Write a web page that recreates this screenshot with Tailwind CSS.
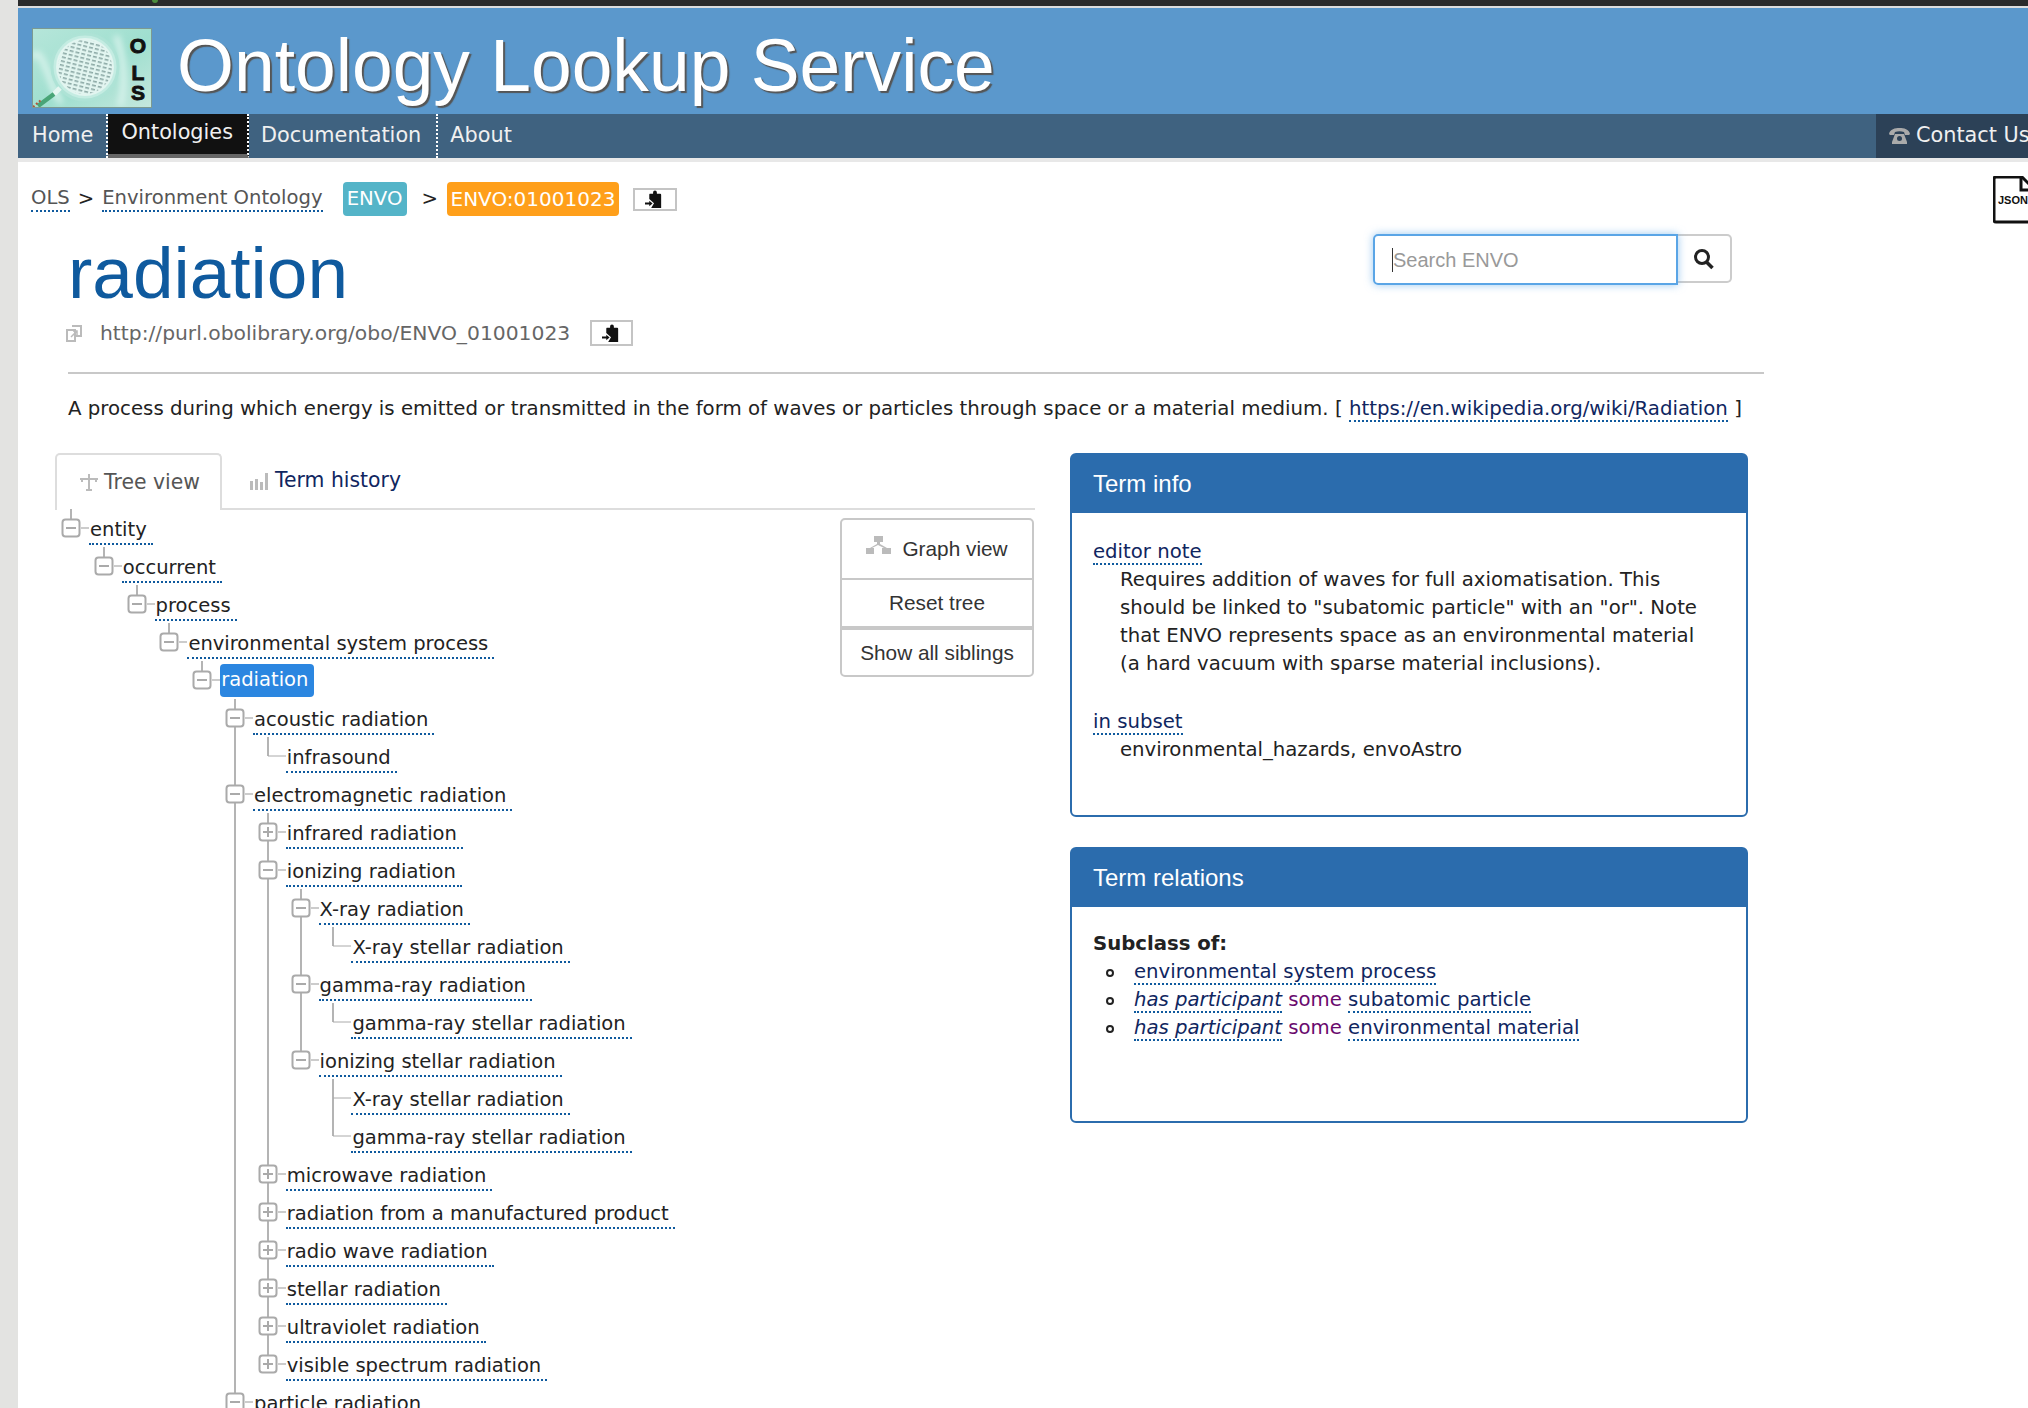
<!DOCTYPE html>
<html lang="en">
<head>
    <meta charset="UTF-8">
    <title>radiation - OLS</title>
    <script src="https://cdn.jsdelivr.net/npm/@tailwindcss/browser@4"></script>
</head>
<body class="w-[2028px] h-[1408px] overflow-hidden bg-[#e3e3e1] font-['DejaVu_Sans',sans-serif] text-[19.7px] text-[#222]">
    <!-- shared icons -->
    <svg class="hidden">
        <symbol id="minus" viewBox="0 0 28 20"><path d="M20 10h8" stroke="#999" fill="none"/><rect x="1.5" y="1.5" width="17" height="17" rx="3" fill="#fff" stroke="#aaa" stroke-width="2"/><path d="M5 10h10" stroke="#aaa" stroke-width="2"/></symbol>
        <symbol id="plus" viewBox="0 0 28 20"><path d="M20 10h8" stroke="#999" fill="none"/><rect x="1.5" y="1.5" width="17" height="17" rx="3" fill="#fff" stroke="#aaa" stroke-width="2"/><path d="M5 10h10M10 5v10" stroke="#aaa" stroke-width="2"/></symbol>
        <symbol id="leaf" viewBox="0 0 28 20"><path d="M10 10h18" stroke="#aaa" fill="none"/></symbol>
        <symbol id="clip" viewBox="0 0 20 20"><path d="M5 4h3.500V2.500a2 2 0 0 1 4 0V4H16a1 1 0 0 1 1 1v14H6.500l3-5-5-4.500V5a1 1 0 0 1 .500-1z" fill="#111"/><path d="M0 13.200h4.500v-2l3.500 3-3.500 3v-2H0z" fill="#111"/></symbol>
    </svg>

    <div class="ml-[18px] w-[2040px]">
        <div class="relative h-[6px] bg-[#2b2b2b]"><span class="absolute left-[134px] top-0 h-[3px] w-[6px] rounded-b-full bg-[#4c8c3c]"></span></div>
        <div class="h-[2px] bg-[#dedede]"></div>

        <!-- header -->
        <header class="flex h-[106px] items-start bg-[#5b98cc] pl-[14px] pt-[20px]">
            <svg class="h-[80px] w-[120px] shrink-0" viewBox="0 0 120 80">
                <defs>
                    <linearGradient id="lg" x1="0" y1="0" x2="1" y2="1"><stop offset="0" stop-color="#b6e6da"/><stop offset="0.55" stop-color="#9fdfcf"/><stop offset="1" stop-color="#c6e8de"/></linearGradient>
                    <pattern id="lines" width="6" height="4" patternUnits="userSpaceOnUse" patternTransform="rotate(14)"><rect width="4" height="1.6" fill="#6f8f8c"/></pattern>
                    <filter id="soft"><feGaussianBlur stdDeviation="0.7"/></filter>
                    <filter id="softer"><feGaussianBlur stdDeviation="3"/></filter>
                </defs>
                <rect width="120" height="80" fill="url(#lg)"/>
                <path d="M0 30C10 10 20 70 30 74M84 8c8 20 10 50 4 70" stroke="#d8f3ec" stroke-width="6" fill="none" filter="url(#softer)"/>
                <circle cx="53" cy="39" r="33" fill="#c4ece2" stroke="#aee3d6" stroke-width="3" filter="url(#soft)"/>
                <circle cx="53" cy="39" r="29" fill="#e2f5f0" filter="url(#soft)"/>
                <circle cx="53" cy="39" r="27" fill="url(#lines)" opacity=".75" filter="url(#soft)"/>
                <path d="M28 60L22 66" stroke="#e6f6f1" stroke-width="5"/>
                <path d="M22 66L6 78" stroke="#4aa577" stroke-width="4.500" filter="url(#soft)"/>
                <path d="M1 79l8-7" stroke="#b5533a" stroke-width="2" stroke-dasharray="2 2"/>
                <g font-family="Liberation Sans" font-weight="700" font-size="21" fill="#111" stroke="#111" stroke-width=".9" text-anchor="middle">
                    <text x="106" y="25">O</text>
                    <text x="106" y="52">L</text>
                    <text x="106" y="72">S</text>
                </g>
                <rect x=".5" y=".5" width="119" height="79" fill="none" stroke="#7c9a92"/>
            </svg>
            <div class="ml-[25px] -mt-[7px] font-['Liberation_Sans',sans-serif] text-[73.2px] leading-[90px] text-white [text-shadow:2px_2px_1px_#555] whitespace-nowrap">Ontology Lookup Service</div>
        </header>

        <!-- nav -->
        <nav class="flex h-[44px] justify-between bg-[#3f6280] text-[20.8px] text-[#f0f0f0]">
            <div class="flex">
                <a class="flex items-center border-r-2 border-dotted border-white pl-[14px] pr-[13px]">Home</a>
                <a class="flex items-center border-r-2 border-dotted border-r-white border-b-4 [border-bottom-style:solid] border-b-[#666] bg-[#111] pl-[13px] pr-[14px] pb-[2px]">Ontologies</a>
                <a class="flex items-center border-r-2 border-dotted border-white pl-[12px] pr-[15px]">Documentation</a>
                <a class="flex items-center pl-[12px]">About</a>
            </div>
            <a class="flex w-[182px] shrink-0 items-center gap-[6px] bg-[#2c4157] pl-[13px] whitespace-nowrap">
                <svg class="h-[16px] w-[21px]" viewBox="0 0 21 16"><path d="M0 6C1 1 6 0 10.500 0S20 1 21 6l-1 1h-4l-1-3c-3-1-6-1-9 0L5 7H1z M6 6h9l3 8v2H3v-2z" fill="#aaa"/><circle cx="10.500" cy="10.500" r="2.500" fill="#2c4157"/></svg>
                Contact Us
            </a>
        </nav>
        <div class="h-[4px] bg-[#e8e8e8]"></div>

        <!-- page body -->
        <main class="relative h-[1246px] bg-white pt-[20px]">
            <!-- json download icon -->
            <svg class="absolute left-[1975px] top-[14px] h-[48px] w-[44px]" viewBox="0 0 44 48">
                <path d="M3 1h26l12 12v33H3a2 2 0 0 1-2-2V3a2 2 0 0 1 2-2z" fill="#fff" stroke="#111" stroke-width="3"/>
                <path d="M28 1v13h13" fill="none" stroke="#111" stroke-width="3"/>
                <text x="5" y="28" font-family="Liberation Sans" font-weight="700" font-size="11" fill="#111">JSON</text>
            </svg>

            <!-- breadcrumb -->
            <div class="flex h-[34px] items-center pl-[13px] text-[19.6px] text-[#555]">
                <a class="border-b-2 border-dotted border-[#0f5a9e] leading-[24px]">OLS</a>
                <span class="ml-[8px] text-[#222]">&gt;</span>
                <a class="ml-[8px] border-b-2 border-dotted border-[#0f5a9e] leading-[24px]">Environment Ontology</a>
                <span class="ml-[20px] flex h-[34px] w-[64px] items-center justify-center rounded-[4px] bg-[#54b4c8] text-[19.7px] text-white">ENVO</span>
                <span class="ml-[15px] text-[#222]">&gt;</span>
                <span class="ml-[9px] flex h-[34px] w-[172px] items-center justify-center rounded-[4px] bg-[#ff9f1a] text-[20px] text-white">ENVO:01001023</span>
                <button class="ml-[14px] flex h-[23px] w-[44px] items-center justify-center border-2 border-[#c4c4c4]"><svg class="h-[19px] w-[19px]"><use href="#clip"/></svg></button>
            </div>

            <!-- title and search -->
            <div class="mt-[18px] flex pl-[50px]">
                <div class="w-[1305px] shrink-0">
                    <h1 class="mt-[3px] font-['Liberation_Sans',sans-serif] text-[73px] leading-[72px] text-[#0f5a9e]">radiation</h1>
                    <div class="mt-[11px] flex h-[26px] items-center text-[20.3px] text-[#666]">
                        <svg class="-ml-[2px] h-[17px] w-[16px]" viewBox="0 0 16 17"><path d="M1 5h8v11H1zM6 1h9v10H9" fill="none" stroke="#bbb" stroke-width="2"/><path d="M5 12l6-6M7 6h4v4" fill="none" stroke="#bbb" stroke-width="1.500"/></svg>
                        <span class="ml-[18px]">http://purl.obolibrary.org/obo/ENVO_01001023</span>
                        <button class="ml-[20px] flex h-[26px] w-[43px] items-center justify-center border-2 border-[#c4c4c4]"><svg class="h-[19px] w-[19px]"><use href="#clip"/></svg></button>
                    </div>
                </div>
                <div class="flex h-[51px] items-start">
                    <div class="z-10 flex h-[51px] w-[305px] items-center rounded-l-[5px] border-2 border-[#5aa5e6] pl-[17px] font-['Liberation_Sans',sans-serif] text-[20px] text-[#999] shadow-[0_0_8px_rgba(90,165,230,0.6)]"><span class="h-[24px] w-px bg-[#333]"></span>Search ENVO</div>
                    <button class="flex h-[49px] w-[54px] items-center justify-center rounded-r-[5px] border-2 border-l-0 border-[#ccc]">
                        <svg class="h-[22px] w-[22px]" viewBox="0 0 22 22"><circle cx="9" cy="9" r="6.500" fill="none" stroke="#222" stroke-width="3"/><path d="M13.500 14l6 6" stroke="#222" stroke-width="3.500"/></svg>
                    </button>
                </div>
            </div>

            <div class="mt-[26px] ml-[50px] h-[2px] w-[1696px] bg-[#c8c8c8]"></div>
            <p class="mt-[21px] ml-[50px] text-[19.75px] leading-[28px] whitespace-nowrap">A process during which energy is emitted or transmitted in the form of waves or particles through space or a material medium. [ <a class="border-b-2 border-dotted border-[#0f5a9e] text-[#10265f]">https://en.wikipedia.org/wiki/Radiation</a> ]</p>

            <div class="mt-[30px] ml-[37px] flex items-start gap-[35px]">
                <!-- left column: tabs and tree -->
                <section class="w-[980px] shrink-0">
                    <div class="flex h-[57px] border-b-2 border-[#ddd] text-[20.4px]">
                        <div class="-mb-[2px] flex h-[57px] w-[167px] items-center rounded-t-[5px] border-2 border-b-0 border-[#ddd] bg-white pl-[22px] text-[#555]">
                            <svg class="h-[20px] w-[20px]" viewBox="0 0 20 20"><path d="M10 1v15M7 17h6M1 6h18M3 6v3M17 6v3" fill="none" stroke="#bbb" stroke-width="2"/></svg>
                            <span class="ml-[5px]">Tree view</span>
                        </div>
                        <div class="flex items-center pl-[28px] text-[#10265f]">
                            <svg class="h-[18px] w-[19px]" viewBox="0 0 19 18"><path d="M0 9h3v9H0zM5 7h3v11H5zM10 10h3v8h-3zM15 1h3v17h-3z" fill="#bbb"/></svg>
                            <span class="ml-[6px]">Term history</span>
                        </div>
                    </div>

                    <div class="flex justify-between">
                        <!-- tree -->
                        <ul class="-mt-[1px] ml-[6px] text-[19.55px]">
                            <li class="relative"><span class="absolute left-[9px] top-0 h-[19px] w-[2px] bg-[#b4b4b4]"></span>
                                <div class="relative flex h-[38px] items-center"><svg class="h-[20px] w-[28px] shrink-0"><use href="#minus"/></svg><a class="-mb-[4px] border-b-2 border-dotted border-[#0f5a9e] pl-px pr-[6px] leading-[27px]">entity</a></div>
                                <ul class="pl-[32.8px]">
                                    <li class="relative"><span class="absolute left-[9px] top-0 h-[19px] w-[2px] bg-[#b4b4b4]"></span>
                                        <div class="relative flex h-[38px] items-center"><svg class="h-[20px] w-[28px] shrink-0"><use href="#minus"/></svg><a class="-mb-[4px] border-b-2 border-dotted border-[#0f5a9e] pl-px pr-[6px] leading-[27px]">occurrent</a></div>
                                        <ul class="pl-[32.8px]">
                                            <li class="relative"><span class="absolute left-[9px] top-0 h-[19px] w-[2px] bg-[#b4b4b4]"></span>
                                                <div class="relative flex h-[38px] items-center"><svg class="h-[20px] w-[28px] shrink-0"><use href="#minus"/></svg><a class="-mb-[4px] border-b-2 border-dotted border-[#0f5a9e] pl-px pr-[6px] leading-[27px]">process</a></div>
                                                <ul class="pl-[32.8px]">
                                                    <li class="relative"><span class="absolute left-[9px] top-0 h-[19px] w-[2px] bg-[#b4b4b4]"></span>
                                                        <div class="relative flex h-[38px] items-center"><svg class="h-[20px] w-[28px] shrink-0"><use href="#minus"/></svg><a class="-mb-[4px] border-b-2 border-dotted border-[#0f5a9e] pl-px pr-[6px] leading-[27px]">environmental system process</a></div>
                                                        <ul class="pl-[32.8px]">
                                                            <li class="relative"><span class="absolute left-[9px] top-0 h-[19px] w-[2px] bg-[#b4b4b4]"></span>
                                                                <div class="relative flex h-[38px] items-center"><svg class="h-[20px] w-[28px] shrink-0"><use href="#minus"/></svg><a class="flex h-[33px] items-center rounded-[4px] bg-[#2b86e0] pl-px pr-[6px] text-white">radiation</a></div>
                                                                <ul class="pl-[32.8px]">
                                                                    <li class="relative"><span class="absolute left-[9px] top-0 bottom-0 w-[2px] bg-[#b4b4b4]"></span>
                                                                        <div class="relative flex h-[38px] items-center"><svg class="h-[20px] w-[28px] shrink-0"><use href="#minus"/></svg><a class="-mb-[4px] border-b-2 border-dotted border-[#0f5a9e] pl-px pr-[6px] leading-[27px]">acoustic radiation</a></div>
                                                                        <ul class="pl-[32.8px]">
                                                                            <li class="relative"><span class="absolute left-[9px] top-0 h-[19px] w-[2px] bg-[#b4b4b4]"></span>
                                                                                <div class="relative flex h-[38px] items-center"><svg class="h-[20px] w-[28px] shrink-0"><use href="#leaf"/></svg><a class="-mb-[4px] border-b-2 border-dotted border-[#0f5a9e] pl-px pr-[6px] leading-[27px]">infrasound</a></div>
                                                                            </li>
                                                                        </ul>
                                                                    </li>
                                                                    <li class="relative"><span class="absolute left-[9px] top-0 bottom-0 w-[2px] bg-[#b4b4b4]"></span>
                                                                        <div class="relative flex h-[38px] items-center"><svg class="h-[20px] w-[28px] shrink-0"><use href="#minus"/></svg><a class="-mb-[4px] border-b-2 border-dotted border-[#0f5a9e] pl-px pr-[6px] leading-[27px]">electromagnetic radiation</a></div>
                                                                        <ul class="pl-[32.8px]">
                                                                            <li class="relative"><span class="absolute left-[9px] top-0 bottom-0 w-[2px] bg-[#b4b4b4]"></span>
                                                                                <div class="relative flex h-[38px] items-center"><svg class="h-[20px] w-[28px] shrink-0"><use href="#plus"/></svg><a class="-mb-[4px] border-b-2 border-dotted border-[#0f5a9e] pl-px pr-[6px] leading-[27px]">infrared radiation</a></div>
                                                                            </li>
                                                                            <li class="relative"><span class="absolute left-[9px] top-0 bottom-0 w-[2px] bg-[#b4b4b4]"></span>
                                                                                <div class="relative flex h-[38px] items-center"><svg class="h-[20px] w-[28px] shrink-0"><use href="#minus"/></svg><a class="-mb-[4px] border-b-2 border-dotted border-[#0f5a9e] pl-px pr-[6px] leading-[27px]">ionizing radiation</a></div>
                                                                                <ul class="pl-[32.8px]">
                                                                                    <li class="relative"><span class="absolute left-[9px] top-0 bottom-0 w-[2px] bg-[#b4b4b4]"></span>
                                                                                        <div class="relative flex h-[38px] items-center"><svg class="h-[20px] w-[28px] shrink-0"><use href="#minus"/></svg><a class="-mb-[4px] border-b-2 border-dotted border-[#0f5a9e] pl-px pr-[6px] leading-[27px]">X-ray radiation</a></div>
                                                                                        <ul class="pl-[32.8px]">
                                                                                            <li class="relative"><span class="absolute left-[9px] top-0 h-[19px] w-[2px] bg-[#b4b4b4]"></span>
                                                                                                <div class="relative flex h-[38px] items-center"><svg class="h-[20px] w-[28px] shrink-0"><use href="#leaf"/></svg><a class="-mb-[4px] border-b-2 border-dotted border-[#0f5a9e] pl-px pr-[6px] leading-[27px]">X-ray stellar radiation</a></div>
                                                                                            </li>
                                                                                        </ul>
                                                                                    </li>
                                                                                    <li class="relative"><span class="absolute left-[9px] top-0 bottom-0 w-[2px] bg-[#b4b4b4]"></span>
                                                                                        <div class="relative flex h-[38px] items-center"><svg class="h-[20px] w-[28px] shrink-0"><use href="#minus"/></svg><a class="-mb-[4px] border-b-2 border-dotted border-[#0f5a9e] pl-px pr-[6px] leading-[27px]">gamma-ray radiation</a></div>
                                                                                        <ul class="pl-[32.8px]">
                                                                                            <li class="relative"><span class="absolute left-[9px] top-0 h-[19px] w-[2px] bg-[#b4b4b4]"></span>
                                                                                                <div class="relative flex h-[38px] items-center"><svg class="h-[20px] w-[28px] shrink-0"><use href="#leaf"/></svg><a class="-mb-[4px] border-b-2 border-dotted border-[#0f5a9e] pl-px pr-[6px] leading-[27px]">gamma-ray stellar radiation</a></div>
                                                                                            </li>
                                                                                        </ul>
                                                                                    </li>
                                                                                    <li class="relative"><span class="absolute left-[9px] top-0 h-[19px] w-[2px] bg-[#b4b4b4]"></span>
                                                                                        <div class="relative flex h-[38px] items-center"><svg class="h-[20px] w-[28px] shrink-0"><use href="#minus"/></svg><a class="-mb-[4px] border-b-2 border-dotted border-[#0f5a9e] pl-px pr-[6px] leading-[27px]">ionizing stellar radiation</a></div>
                                                                                        <ul class="pl-[32.8px]">
                                                                                            <li class="relative"><span class="absolute left-[9px] top-0 bottom-0 w-[2px] bg-[#b4b4b4]"></span>
                                                                                                <div class="relative flex h-[38px] items-center"><svg class="h-[20px] w-[28px] shrink-0"><use href="#leaf"/></svg><a class="-mb-[4px] border-b-2 border-dotted border-[#0f5a9e] pl-px pr-[6px] leading-[27px]">X-ray stellar radiation</a></div>
                                                                                            </li>
                                                                                            <li class="relative"><span class="absolute left-[9px] top-0 h-[19px] w-[2px] bg-[#b4b4b4]"></span>
                                                                                                <div class="relative flex h-[38px] items-center"><svg class="h-[20px] w-[28px] shrink-0"><use href="#leaf"/></svg><a class="-mb-[4px] border-b-2 border-dotted border-[#0f5a9e] pl-px pr-[6px] leading-[27px]">gamma-ray stellar radiation</a></div>
                                                                                            </li>
                                                                                        </ul>
                                                                                    </li>
                                                                                </ul>
                                                                            </li>
                                                                            <li class="relative"><span class="absolute left-[9px] top-0 bottom-0 w-[2px] bg-[#b4b4b4]"></span>
                                                                                <div class="relative flex h-[38px] items-center"><svg class="h-[20px] w-[28px] shrink-0"><use href="#plus"/></svg><a class="-mb-[4px] border-b-2 border-dotted border-[#0f5a9e] pl-px pr-[6px] leading-[27px]">microwave radiation</a></div>
                                                                            </li>
                                                                            <li class="relative"><span class="absolute left-[9px] top-0 bottom-0 w-[2px] bg-[#b4b4b4]"></span>
                                                                                <div class="relative flex h-[38px] items-center"><svg class="h-[20px] w-[28px] shrink-0"><use href="#plus"/></svg><a class="-mb-[4px] border-b-2 border-dotted border-[#0f5a9e] pl-px pr-[6px] leading-[27px]">radiation from a manufactured product</a></div>
                                                                            </li>
                                                                            <li class="relative"><span class="absolute left-[9px] top-0 bottom-0 w-[2px] bg-[#b4b4b4]"></span>
                                                                                <div class="relative flex h-[38px] items-center"><svg class="h-[20px] w-[28px] shrink-0"><use href="#plus"/></svg><a class="-mb-[4px] border-b-2 border-dotted border-[#0f5a9e] pl-px pr-[6px] leading-[27px]">radio wave radiation</a></div>
                                                                            </li>
                                                                            <li class="relative"><span class="absolute left-[9px] top-0 bottom-0 w-[2px] bg-[#b4b4b4]"></span>
                                                                                <div class="relative flex h-[38px] items-center"><svg class="h-[20px] w-[28px] shrink-0"><use href="#plus"/></svg><a class="-mb-[4px] border-b-2 border-dotted border-[#0f5a9e] pl-px pr-[6px] leading-[27px]">stellar radiation</a></div>
                                                                            </li>
                                                                            <li class="relative"><span class="absolute left-[9px] top-0 bottom-0 w-[2px] bg-[#b4b4b4]"></span>
                                                                                <div class="relative flex h-[38px] items-center"><svg class="h-[20px] w-[28px] shrink-0"><use href="#plus"/></svg><a class="-mb-[4px] border-b-2 border-dotted border-[#0f5a9e] pl-px pr-[6px] leading-[27px]">ultraviolet radiation</a></div>
                                                                            </li>
                                                                            <li class="relative"><span class="absolute left-[9px] top-0 h-[19px] w-[2px] bg-[#b4b4b4]"></span>
                                                                                <div class="relative flex h-[38px] items-center"><svg class="h-[20px] w-[28px] shrink-0"><use href="#plus"/></svg><a class="-mb-[4px] border-b-2 border-dotted border-[#0f5a9e] pl-px pr-[6px] leading-[27px]">visible spectrum radiation</a></div>
                                                                            </li>
                                                                        </ul>
                                                                    </li>
                                                                    <li class="relative"><span class="absolute left-[9px] top-0 h-[19px] w-[2px] bg-[#b4b4b4]"></span>
                                                                        <div class="relative flex h-[38px] items-center"><svg class="h-[20px] w-[28px] shrink-0"><use href="#minus"/></svg><a class="-mb-[4px] border-b-2 border-dotted border-[#0f5a9e] pl-px pr-[6px] leading-[27px]">particle radiation</a></div>
                                                                    </li>
                                                                </ul>
                                                            </li>
                                                        </ul>
                                                    </li>
                                                </ul>
                                            </li>
                                        </ul>
                                    </li>
                                </ul>
                            </li>
                        </ul>

                        <!-- tree buttons -->
                        <div class="mt-[8px] mr-[1px] h-[159px] w-[194px] rounded-[5px] border-2 border-[#c8c8c8] font-['Liberation_Sans',sans-serif] text-[20.8px] text-[#333]">
                            <div class="flex h-[60px] items-center justify-center gap-[11px] border-b-2 border-[#c8c8c8]">
                                <svg class="-mt-[8px] h-[18px] w-[25px]" viewBox="0 0 25 18"><path d="M8 0h9v6h-3v2l7 4h4v6h-9v-6h2l-6-3-6 3h2v6H0v-6h4l7-4V6H8z" fill="#bbb"/></svg>
                                <span>Graph view</span>
                            </div>
                            <div class="flex h-[50px] items-center justify-center border-b-4 border-[#c8c8c8]">Reset tree</div>
                            <div class="flex h-[45px] items-center justify-center">Show all siblings</div>
                        </div>
                    </div>
                </section>

                <!-- right column: panels -->
                <aside class="w-[678px] shrink-0">
                    <section class="h-[364px] rounded-[6px] border-2 border-[#2b6cad]">
                        <h2 class="flex h-[58px] items-center bg-[#2b6cad] pl-[21px] font-['Liberation_Sans',sans-serif] text-[24px] text-white">Term info</h2>
                        <div class="pl-[21px] pr-[40px] pt-[25px] leading-[28px]">
                            <a class="inline-block border-b-2 border-dotted border-[#0f5a9e] leading-[22px] text-[#10265f]">editor note</a>
                            <p class="pl-[27px]">Requires addition of waves for full axiomatisation. This should be linked to "subatomic particle" with an "or". Note that ENVO represents space as an environmental material (a hard vacuum with sparse material inclusions).</p>
                            <a class="mt-[33px] inline-block border-b-2 border-dotted border-[#0f5a9e] leading-[22px] text-[#10265f]">in subset</a>
                            <p class="pl-[27px]">environmental_hazards, envoAstro</p>
                        </div>
                    </section>
                    <section class="mt-[30px] h-[276px] rounded-[6px] border-2 border-[#2b6cad]">
                        <h2 class="flex h-[58px] items-center bg-[#2b6cad] pl-[21px] font-['Liberation_Sans',sans-serif] text-[24px] text-white">Term relations</h2>
                        <div class="pl-[21px] pt-[23px] leading-[28px]">
                            <b class="font-bold">Subclass of:</b>
                            <ul class="pl-[41px]">
                                <li class="relative"><span class="absolute -left-[28px] top-[11px] size-[8px] rounded-full border-2 border-[#222]"></span><a class="border-b-2 border-dotted border-[#0f5a9e] text-[#10265f]">environmental system process</a></li>
                                <li class="relative"><span class="absolute -left-[28px] top-[11px] size-[8px] rounded-full border-2 border-[#222]"></span><a class="border-b-2 border-dotted border-[#0f5a9e] italic text-[#10265f]">has participant</a> <span class="text-[#6a0a6e]">some</span> <a class="border-b-2 border-dotted border-[#0f5a9e] text-[#10265f]">subatomic particle</a></li>
                                <li class="relative"><span class="absolute -left-[28px] top-[11px] size-[8px] rounded-full border-2 border-[#222]"></span><a class="border-b-2 border-dotted border-[#0f5a9e] italic text-[#10265f]">has participant</a> <span class="text-[#6a0a6e]">some</span> <a class="border-b-2 border-dotted border-[#0f5a9e] text-[#10265f]">environmental material</a></li>
                            </ul>
                        </div>
                    </section>
                </aside>
            </div>
        </main>
    </div>
</body>
</html>
